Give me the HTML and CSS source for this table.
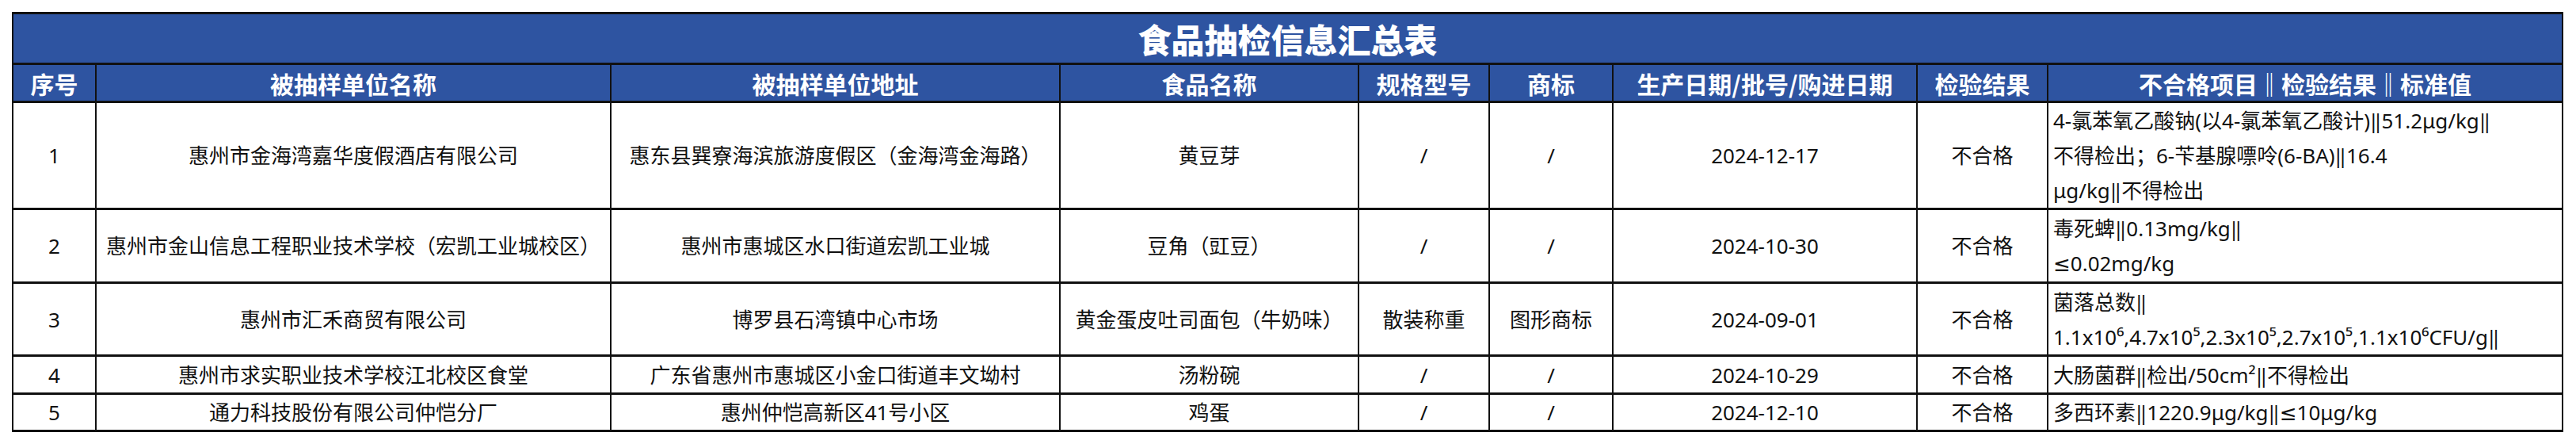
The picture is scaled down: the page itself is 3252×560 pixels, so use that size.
FILE: index.html
```html
<!DOCTYPE html>
<html lang="zh-CN">
<head>
<meta charset="utf-8">
<title>食品抽检信息汇总表</title>
<link rel="stylesheet" href="styles.css">
</head>
<body>
<table class="sheet">
  <colgroup>
    <col class="c-no">
    <col class="c-unit">
    <col class="c-addr">
    <col class="c-food">
    <col class="c-spec">
    <col class="c-brand">
    <col class="c-date">
    <col class="c-result">
    <col class="c-detail">
  </colgroup>
  <thead>
    <tr class="title-row"><th colspan="9">食品抽检信息汇总表</th></tr>
    <tr class="head-row">
      <th>序号</th>
      <th>被抽样单位名称</th>
      <th>被抽样单位地址</th>
      <th>食品名称</th>
      <th>规格型号</th>
      <th>商标</th>
      <th>生产日期/批号/购进日期</th>
      <th>检验结果</th>
      <th>不合格项目‖检验结果‖标准值</th>
    </tr>
  </thead>
  <tbody>
    <tr class="r1">
      <td>1</td>
      <td>惠州市金海湾嘉华度假酒店有限公司</td>
      <td>惠东县巽寮海滨旅游度假区（金海湾金海路）</td>
      <td>黄豆芽</td>
      <td>/</td>
      <td>/</td>
      <td>2024-12-17</td>
      <td>不合格</td>
      <td class="detail">4-氯苯氧乙酸钠(以4-氯苯氧乙酸计)‖51.2μg/kg‖<br>不得检出；6-苄基腺嘌呤(6-BA)‖16.4<br>μg/kg‖不得检出</td>
    </tr>
    <tr class="r2">
      <td>2</td>
      <td>惠州市金山信息工程职业技术学校（宏凯工业城校区）</td>
      <td>惠州市惠城区水口街道宏凯工业城</td>
      <td>豆角（豇豆）</td>
      <td>/</td>
      <td>/</td>
      <td>2024-10-30</td>
      <td>不合格</td>
      <td class="detail">毒死蜱‖0.13mg/kg‖<br>≤0.02mg/kg</td>
    </tr>
    <tr class="r3">
      <td>3</td>
      <td>惠州市汇禾商贸有限公司</td>
      <td>博罗县石湾镇中心市场</td>
      <td>黄金蛋皮吐司面包（牛奶味）</td>
      <td>散装称重</td>
      <td>图形商标</td>
      <td>2024-09-01</td>
      <td>不合格</td>
      <td class="detail">菌落总数‖<br>1.1x10⁶,4.7x10⁵,2.3x10⁵,2.7x10⁵,1.1x10⁶CFU/g‖</td>
    </tr>
    <tr class="r4">
      <td>4</td>
      <td>惠州市求实职业技术学校江北校区食堂</td>
      <td>广东省惠州市惠城区小金口街道丰文坳村</td>
      <td>汤粉碗</td>
      <td>/</td>
      <td>/</td>
      <td>2024-10-29</td>
      <td>不合格</td>
      <td class="detail">大肠菌群‖检出/50cm²‖不得检出</td>
    </tr>
    <tr class="r5">
      <td>5</td>
      <td>通力科技股份有限公司仲恺分厂</td>
      <td>惠州仲恺高新区41号小区</td>
      <td>鸡蛋</td>
      <td>/</td>
      <td>/</td>
      <td>2024-12-10</td>
      <td>不合格</td>
      <td class="detail">多西环素‖1220.9μg/kg‖≤10μg/kg</td>
    </tr>
  </tbody>
</table>
</body>
</html>
```
FILE: styles.css
```css
html, body {
  margin: 0;
  padding: 0;
  background: #ffffff;
}

body {
  padding: 15px 0 0 15px;
  font-family: "Noto Sans", "DejaVu Sans", "Noto Sans CJK SC", sans-serif;
  color: #111;
}

.sheet {
  border-collapse: collapse;
  table-layout: fixed;
  width: 3221px;
}

.c-no { width: 105px; }
.c-unit { width: 650px; }
.c-addr { width: 567px; }
.c-food { width: 377px; }
.c-spec { width: 165px; }
.c-brand { width: 156px; }
.c-date { width: 384px; }
.c-result { width: 165px; }
.c-detail { width: 650px; }

.sheet th,
.sheet td {
  border-left: 2px solid #111;
  border-right: 2px solid #111;
  border-top: 3px solid #111;
  border-bottom: 3px solid #111;
  padding: 0 4px;
  text-align: center;
  vertical-align: middle;
  white-space: nowrap;
  overflow: hidden;
}

.title-row th {
  height: 61px;
  background: #2e54a1;
  color: #ffffff;
  font-family: "Noto Sans CJK SC", sans-serif;
  font-weight: 900;
  font-size: 42px;
  line-height: 1;
}

.head-row th {
  height: 45px;
  background: #2e54a1;
  color: #ffffff;
  font-family: "Noto Sans CJK SC", sans-serif;
  font-weight: 700;
  font-size: 30px;
  line-height: 1;
}

.sheet td {
  font-size: 26px;
  line-height: 44px;
}

.sheet td.detail {
  text-align: left;
  padding-left: 6px;
}

.r1 td { height: 132px; }
.r2 td { height: 90px; }
.r3 td { height: 89px; }
.r4 td { height: 45px; }
.r5 td { height: 44px; }
```
